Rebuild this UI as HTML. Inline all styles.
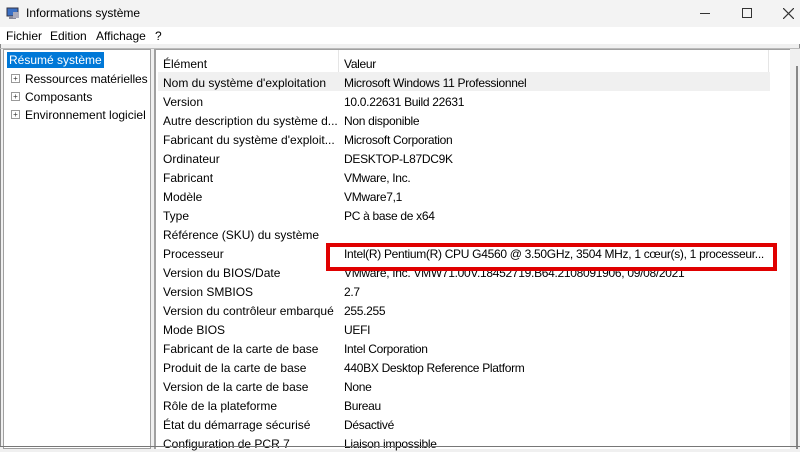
<!DOCTYPE html>
<html><head><style>
*{margin:0;padding:0;box-sizing:border-box}
body{width:800px;height:447px;overflow:hidden;background:#f0f0f0;font-family:"Liberation Sans",sans-serif;font-size:12px;color:#000;position:relative}
.win{position:absolute;left:0;top:0;width:800px;height:447px;border:1px solid #8a8a8a;border-bottom:none}
.title{position:absolute;left:0;top:0;width:800px;height:27px;background:#f3f3f3}
.title span{position:absolute;left:26px;top:6px;font-size:12px}
.menu{position:absolute;left:0;top:27px;width:800px;height:17px;background:#fff}
.menu span{position:absolute;top:2px}
.left{position:absolute;left:3px;top:49px;width:148px;height:400px;background:#fff;border:1px solid #a0a0a0}
.right{position:absolute;left:154px;top:49px;width:646px;height:400px;background:#fff;border-left:2px solid #a0a0a0;border-top:1px solid #a0a0a0}
.row{position:absolute;left:2px;width:612px;height:19px}
.row span{position:absolute;top:4px;white-space:nowrap}
.c1{left:5px}.c2{left:186px;letter-spacing:-0.3px}
.sb{position:absolute;left:790px;top:49px;width:10px;height:400px;background:#f0f0f0}
.plus{position:absolute;left:7px;width:9px;height:9px;border:1px solid #999;font-size:8px;line-height:7px;text-align:center;color:#333}
</style></head><body>
<div class="win"></div>
<div class="title">
<svg style="position:absolute;left:6px;top:7px" width="14" height="13"><rect x="1" y="1" width="11" height="8" fill="#3a6fc4" stroke="#334"/><rect x="3" y="9" width="7" height="3" fill="#889"/><rect x="7" y="5" width="6" height="6" fill="#aab"/></svg>
<span>Informations système</span>
<div style="position:absolute;left:700px;top:13px;width:10px;height:1px;background:#333"></div>
<div style="position:absolute;left:742px;top:8px;width:10px;height:10px;border:1px solid #333"></div>
<svg style="position:absolute;left:783px;top:8px" width="11" height="11"><path d="M0 0L11 11M11 0L0 11" stroke="#333" stroke-width="1.2"/></svg>
</div>
<div class="menu"><span style="left:6px">Fichier</span><span style="left:50px">Edition</span><span style="left:96px">Affichage</span><span style="left:155px">?</span></div>
<div style="position:absolute;left:0;top:48px;width:800px;height:1px;background:#bbb"></div>
<div class="left">
<div style="position:absolute;left:3px;top:2px;background:#0078d7;color:#fff;padding:1px 2px">Résumé système</div>
<div class="plus" style="top:24px">+</div><span style="position:absolute;left:21px;top:22px;letter-spacing:-0.1px">Ressources matérielles</span>
<div class="plus" style="top:42px">+</div><span style="position:absolute;left:21px;top:40px">Composants</span>
<div class="plus" style="top:60px">+</div><span style="position:absolute;left:21px;top:58px">Environnement logiciel</span>
</div>
<div class="right">
<div style="position:absolute;left:182px;top:0;width:1px;height:22px;background:#e5e5e5"></div>
<div style="position:absolute;left:612px;top:0;width:1px;height:22px;background:#e5e5e5"></div>
<div class="row" style="top:3px"><span class="c1">Élément</span><span class="c2">Valeur</span></div>
<div class="row" style="top:22px;background:#f0f0f0"><span class="c1">Nom du système d'exploitation</span><span class="c2">Microsoft Windows 11 Professionnel</span></div>
<div class="row" style="top:41px"><span class="c1">Version</span><span class="c2">10.0.22631 Build 22631</span></div>
<div class="row" style="top:60px"><span class="c1">Autre description du système d...</span><span class="c2">Non disponible</span></div>
<div class="row" style="top:79px"><span class="c1">Fabricant du système d'exploit...</span><span class="c2">Microsoft Corporation</span></div>
<div class="row" style="top:98px"><span class="c1">Ordinateur</span><span class="c2">DESKTOP-L87DC9K</span></div>
<div class="row" style="top:117px"><span class="c1">Fabricant</span><span class="c2">VMware, Inc.</span></div>
<div class="row" style="top:136px"><span class="c1">Modèle</span><span class="c2">VMware7,1</span></div>
<div class="row" style="top:155px"><span class="c1">Type</span><span class="c2">PC à base de x64</span></div>
<div class="row" style="top:174px"><span class="c1">Référence (SKU) du système</span></div>
<div class="row" style="top:193px"><span class="c1">Processeur</span><span class="c2">Intel(R) Pentium(R) CPU G4560 @ 3.50GHz, 3504 MHz, 1 cœur(s), 1 processeur...</span></div>
<div class="row" style="top:212px"><span class="c1">Version du BIOS/Date</span><span class="c2">VMware, Inc. VMW71.00V.18452719.B64.2108091906, 09/08/2021</span></div>
<div class="row" style="top:231px"><span class="c1">Version SMBIOS</span><span class="c2">2.7</span></div>
<div class="row" style="top:250px"><span class="c1">Version du contrôleur embarqué</span><span class="c2">255.255</span></div>
<div class="row" style="top:269px"><span class="c1">Mode BIOS</span><span class="c2">UEFI</span></div>
<div class="row" style="top:288px"><span class="c1">Fabricant de la carte de base</span><span class="c2">Intel Corporation</span></div>
<div class="row" style="top:307px"><span class="c1">Produit de la carte de base</span><span class="c2">440BX Desktop Reference Platform</span></div>
<div class="row" style="top:326px"><span class="c1">Version de la carte de base</span><span class="c2">None</span></div>
<div class="row" style="top:345px"><span class="c1">Rôle de la plateforme</span><span class="c2">Bureau</span></div>
<div class="row" style="top:364px"><span class="c1">État du démarrage sécurisé</span><span class="c2">Désactivé</span></div>
<div class="row" style="top:383px"><span class="c1">Configuration de PCR 7</span><span class="c2">Liaison impossible</span></div>
</div>
<div style="position:absolute;left:326px;top:243px;width:451px;height:28px;border:4px solid #e00000"></div>
<div class="sb"><div style="position:absolute;left:6px;top:17px;width:2px;height:383px;background:#888"></div></div>
<div style="position:absolute;left:0;top:446px;width:800px;height:1px;background:#777"></div>
</body></html>
